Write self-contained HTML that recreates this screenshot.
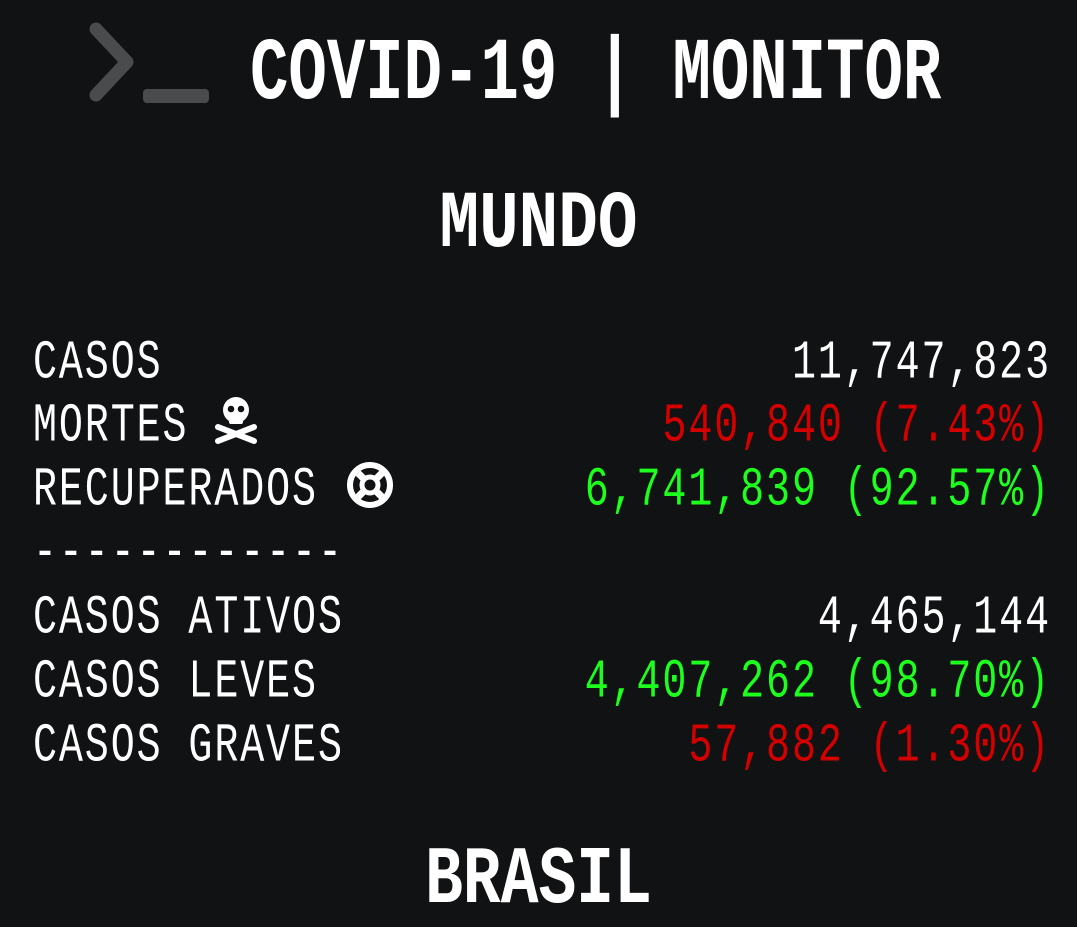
<!DOCTYPE html>
<html><head><meta charset="utf-8"><style>
html,body{margin:0;padding:0;background:#111214;width:1077px;height:921px;overflow:hidden}
.r{position:absolute;left:33px;width:1016px;height:40px;font:40px/40px "Liberation Mono",monospace;letter-spacing:1.9px;color:#fff;transform:scaleY(1.36);transform-origin:0 31px;white-space:pre}
.r .v{position:absolute;right:-2px;top:0}
.red{color:#d40000}.grn{color:#1dff1d}
.h{position:absolute;left:0;width:1077px;text-align:center;font-family:"Liberation Mono",monospace;font-weight:bold;color:#fff;white-space:pre}
</style></head><body>
<svg style="position:absolute;left:0;top:0" width="220" height="120">
<polyline points="96,29 127,62 96,95" fill="none" stroke="#4a4b4d" stroke-width="13" stroke-linecap="round" stroke-linejoin="round"/>
<rect x="143" y="89" width="66" height="14" rx="4" fill="#4a4b4d"/>
</svg>
<div class="h" style="left:250px;width:700px;text-align:left;font-size:64px;line-height:64px;transform:scaleY(1.38);transform-origin:0 48px;top:50px">COVID-19 | MONITOR</div>
<div class="h" style="font-size:66px;line-height:66px;top:196px;transform:scaleY(1.22);transform-origin:0 50px">MUNDO</div>
<div class="h" style="font-size:63px;line-height:63px;top:854px;transform:scaleY(1.3);transform-origin:0 48px">BRASIL</div>

<div class="r" style="top:349px">CASOS<span class="v">11,747,823</span></div>
<div class="r" style="top:412px">MORTES<span class="v red">540,840 (7.43%)</span></div>
<div class="r" style="top:476px">RECUPERADOS<span class="v grn">6,741,839 (92.57%)</span></div>
<div class="r" style="top:539px">------------</div>
<div class="r" style="top:604px">CASOS ATIVOS<span class="v">4,465,144</span></div>
<div class="r" style="top:668px">CASOS LEVES<span class="v grn">4,407,262 (98.70%)</span></div>
<div class="r" style="top:732px">CASOS GRAVES<span class="v red">57,882 (1.30%)</span></div>

<svg style="position:absolute;left:210px;top:395px" width="52" height="52" viewBox="0 0 52 52">
<circle cx="26" cy="15" r="13" fill="#fff"/>
<rect x="19" y="20" width="14" height="9" rx="2" fill="#fff"/>
<circle cx="21" cy="14" r="3.3" fill="#111214"/><circle cx="31" cy="14" r="3.3" fill="#111214"/>
<line x1="8" y1="32" x2="44" y2="46" stroke="#fff" stroke-width="6" stroke-linecap="round"/>
<line x1="44" y1="32" x2="8" y2="46" stroke="#fff" stroke-width="6" stroke-linecap="round"/>
</svg>
<svg style="position:absolute;left:345px;top:460px" width="50" height="50" viewBox="0 0 50 50">
<circle cx="25" cy="25" r="20" fill="none" stroke="#fff" stroke-width="6"/>
<circle cx="25" cy="25" r="8" fill="none" stroke="#fff" stroke-width="5"/>
<g stroke="#fff" stroke-width="7"><line x1="13" y1="13" x2="19" y2="19"/><line x1="37" y1="13" x2="31" y2="19"/><line x1="13" y1="37" x2="19" y2="31"/><line x1="37" y1="37" x2="31" y2="31"/></g>
</svg>
</body></html>
